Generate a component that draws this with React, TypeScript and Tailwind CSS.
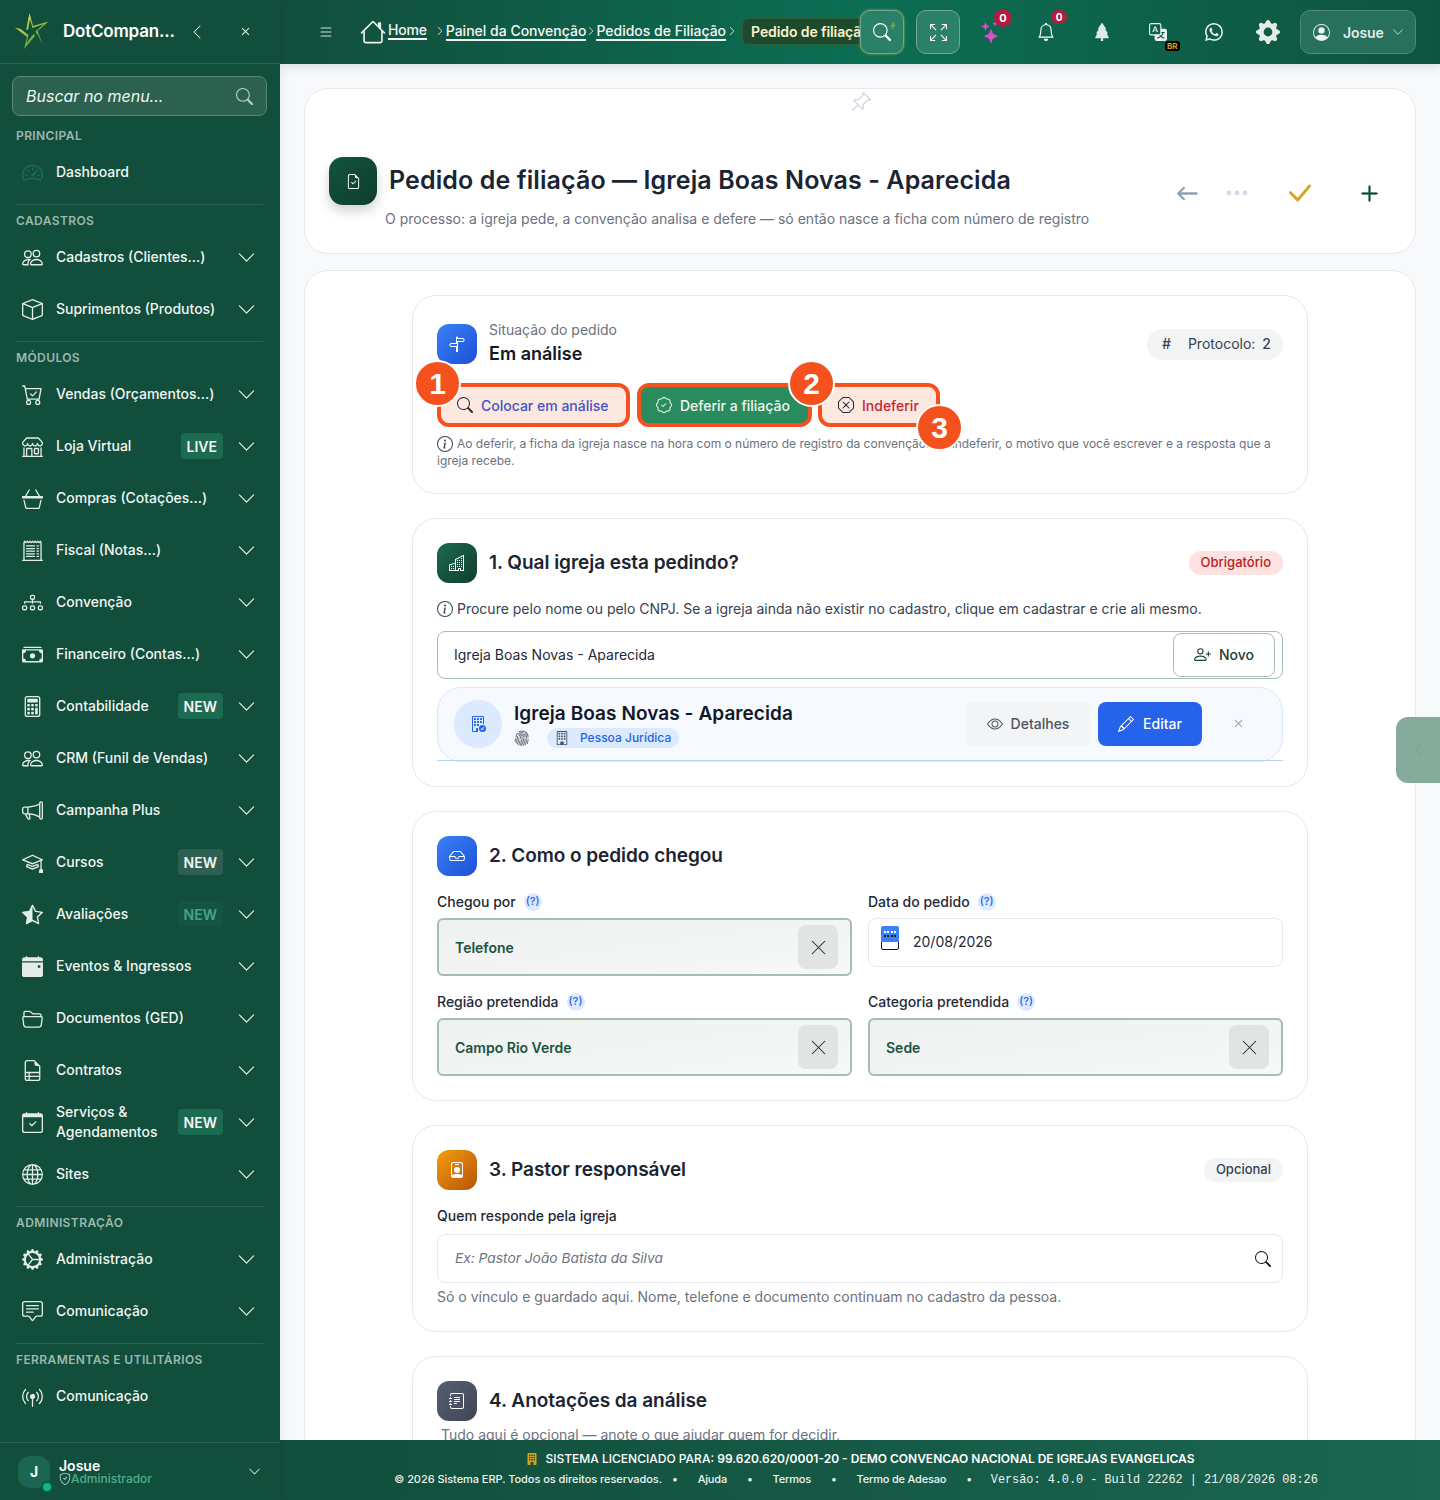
import React from "react";
import {
  BsSpeedometer2, BsPeople, BsBox, BsCartCheck, BsShop, BsBasket3, BsReceiptCutoff, BsDiagram3, BsCashStack,
  BsCalculator, BsMegaphone, BsMortarboard, BsStarHalf, BsCalendarEventFill, BsFolder2Open, BsFileEarmarkRuled,
  BsCalendarCheck, BsGlobe, BsGearWideConnected, BsChatSquareText, BsBroadcastPin, BsList, BsHouse, BsSearch, BsArrowsFullscreen,
  BsStars, BsBell, BsTreeFill, BsTranslate, BsWhatsapp, BsGearFill, BsPersonCircle, BsChevronDown, BsChevronLeft, BsChevronRight,
  BsLightningChargeFill, BsFileEarmarkCheck, BsPinAngle, BsArrowLeft, BsThreeDots, BsCheckLg, BsPlusLg, BsSignpostSplit,
  BsPatchCheck, BsXOctagon, BsInfoCircle, BsBuildings, BsPersonPlus, BsBuildingCheck, BsFingerprint, BsBuilding,
  BsEye, BsPencil, BsX, BsInbox, BsPersonBadge, BsJournalText, BsBuildingFill, BsShieldCheck,
} from "react-icons/bs";
import { X } from "lucide-react";

const display = "font-['Inter','Liberation_Sans',sans-serif]";

type Item = { label: React.ReactNode; icon: React.ComponentType<{ className?: string }>; badge?: string; badgeCls?: string; noChevron?: boolean };

function Row({ item }: { item: Item }) {
  const I = item.icon;
  return (
    <div className="flex h-[52px] items-center pl-[22px] pr-[24px]">
      <I className="h-[21px] w-[21px] shrink-0 text-[#e4ece8]" />
      <div className="ml-[13px] flex-1 text-[14px] font-medium leading-[20px] text-[#f1f5f3]">{item.label}</div>
      {item.badge && (
        <span className={`mr-[14px] flex h-[26px] items-center rounded-[4px] px-[6px] text-[14px] font-semibold ${item.badgeCls ?? "bg-[#1d6a52] text-[#f1f5f3]"}`}>
          {item.badge}
        </span>
      )}
      {!item.noChevron && <BsChevronDown className="h-[19px] w-[19px] shrink-0 text-[#e4ece8]" />}
    </div>
  );
}

function Label({ children }: { children: React.ReactNode }) {
  return <div className="mb-[3px] h-[16px] pl-[16px] text-[12px] font-semibold uppercase leading-[18px] tracking-[0.4px] text-[#9db8ad]">{children}</div>;
}

function Divider() {
  return <div className="mb-[7px] ml-[16px] mr-[17px] mt-[6px] h-px bg-[#2a6352]" />;
}

function Logo() {
  return (
    <svg viewBox="0 0 40 40" className="h-[40px] w-[40px]">
      <defs>
        <linearGradient id="lg" x1="0" y1="0" x2="0.6" y2="1">
          <stop offset="0" stopColor="#fff04a" />
          <stop offset="1" stopColor="#4f9a38" />
        </linearGradient>
      </defs>
      <path d="M16.5 1 L20 14 L35.5 9.5 L24.5 19 L30 33 L24 21.5 L11 37 L14 25 L2 15.5 L13 18.5 Z" fill="url(#lg)" />
      <path d="M17 7 L19.5 16 L31 12 L22.5 19.5 L26.5 28 L20.5 22 L13.5 31 L15.5 23 L7 16.5 L15 18 Z" fill="#114e3c" />
    </svg>
  );
}

function Sidebar() {
  const cad: Item[] = [
    { label: "Cadastros (Clientes...)", icon: BsPeople },
    { label: "Suprimentos (Produtos)", icon: BsBox },
  ];
  const mod: Item[] = [
    { label: "Vendas (Orçamentos...)", icon: BsCartCheck },
    { label: "Loja Virtual", icon: BsShop, badge: "LIVE" },
    { label: "Compras (Cotações...)", icon: BsBasket3 },
    { label: "Fiscal (Notas...)", icon: BsReceiptCutoff },
    { label: "Convenção", icon: BsDiagram3 },
    { label: "Financeiro (Contas...)", icon: BsCashStack },
    { label: "Contabilidade", icon: BsCalculator, badge: "NEW" },
    { label: "CRM (Funil de Vendas)", icon: BsPeople },
    { label: "Campanha Plus", icon: BsMegaphone },
    { label: "Cursos", icon: BsMortarboard, badge: "NEW", badgeCls: "bg-[#2f5f52] text-[#f1f5f3]" },
    { label: "Avaliações", icon: BsStarHalf, badge: "NEW", badgeCls: "bg-[#155443] text-[#45a585]" },
    { label: "Eventos & Ingressos", icon: BsCalendarEventFill },
    { label: "Documentos (GED)", icon: BsFolder2Open },
    { label: "Contratos", icon: BsFileEarmarkRuled },
    { label: <>Serviços &<br />Agendamentos</>, icon: BsCalendarCheck, badge: "NEW" },
    { label: "Sites", icon: BsGlobe },
  ];
  return (
    <aside className="relative z-20 flex h-full w-[280px] shrink-0 flex-col bg-[#114e3c] shadow-[2px_0_10px_rgba(0,0,0,0.06)]">
      <div className="flex h-[64px] shrink-0 items-center border-b border-[#2a6352] pl-[13px] pr-[26px]">
        <Logo />
        <span className={`ml-[10px] flex-1 pt-[1px] text-[17px] font-semibold tracking-[-0.2px] text-white ${display}`}>DotCompan...</span>
        <BsChevronLeft className="mr-[32px] h-[16px] w-[16px] text-[#dfe8e4]" />
        <BsX className="h-[17px] w-[17px] text-[#dfe8e4]" />
      </div>
      <div className="mb-[11px] ml-[12px] mr-[13px] mt-[12px] flex h-[40px] items-center rounded-[8px] border border-[#5a8878] bg-[#2c6150] pl-[13px] pr-[13px]">
        <span className="flex-1 text-[16px] italic text-[#f1f5f3]">Buscar no menu...</span>
        <BsSearch className="h-[17px] w-[17px] text-[#bcd0c7]" />
      </div>
      <Label>Principal</Label>
      <Row item={{ label: "Dashboard", noChevron: true, icon: ({ className }) => <BsSpeedometer2 className={`${className} !text-[#1f6f57]`} /> }} />
      <Divider />
      <Label>Cadastros</Label>
      {cad.map((i, k) => <Row key={k} item={i} />)}
      <Divider />
      <Label>Módulos</Label>
      {mod.map((i, k) => <Row key={k} item={i} />)}
      <Divider />
      <Label>Administração</Label>
      <Row item={{ label: "Administração", icon: BsGearWideConnected }} />
      <Row item={{ label: "Comunicação", icon: BsChatSquareText }} />
      <Divider />
      <Label>Ferramentas e utilitários</Label>
      <Row item={{ label: "Comunicação", icon: BsBroadcastPin, noChevron: true }} />
      <div className="mt-auto flex h-[58px] shrink-0 items-center border-t border-[#2a6352] pl-[18px] pr-[19px]">
        <div className="relative flex h-[32px] w-[32px] items-center justify-center rounded-[12px] bg-[#1a6650] text-[14px] font-bold text-white">
          J
          <span className="absolute -bottom-[3px] right-[-1px] h-[8px] w-[8px] rounded-full bg-[#10b981] ring-2 ring-[#0f5a44]" />
        </div>
        <div className="ml-[9px] flex-1 pt-[2px]">
          <div className="text-[14px] font-semibold leading-[13px] text-white">Josue</div>
          <div className="flex items-center text-[12px] font-medium leading-[14px] text-[#4fae8a]"><BsShieldCheck className="h-[12px] w-[12px] text-[#cfe0d8]" />Administrador</div>
        </div>
        <BsChevronDown className="h-[13px] w-[13px] text-[#dfe8e4]" />
      </div>
    </aside>
  );
}

function Crumb({ children, className = "" }: { children: React.ReactNode; className?: string }) {
  return <span className={`shrink-0 whitespace-nowrap border-b-2 border-[#f1f5f3] text-[14px] font-medium leading-[17px] text-[#f4f7f6] ${className}`}>{children}</span>;
}

function Sep({ className = "" }: { className?: string }) {
  return <BsChevronRight className={`h-[10px] w-[10px] shrink-0 text-[#dfe8e4] ${className}`} />;
}

function TopBar() {
  return (
    <header className="relative z-10 flex h-[64px] shrink-0 items-center bg-gradient-to-r from-[#114e3c] via-[#0a6e52] to-[#0f5440] pl-[38px] pr-[24px] shadow-[0_3px_10px_rgba(0,0,0,0.12)]">
      <BsList className="h-[16px] w-[16px] shrink-0 text-[#cfe0d8]" />
      <BsHouse className="ml-[26px] h-[26px] w-[26px] shrink-0 text-[#eef3f1]" />
      <div className="mb-[2px] ml-[2px] flex w-[474px] shrink-0 items-center overflow-hidden">
        <Crumb className="-mt-[2px] tracking-[-0.2px]">Home</Crumb>
        <Sep className="ml-[8px] mr-[1px]" />
        <Crumb>Painel da Convenção</Crumb>
        <Sep />
        <Crumb>Pedidos de Filiação</Crumb>
        <Sep className="ml-[1px]" />
        <span className="ml-[5px] flex h-[27px] shrink-0 items-center whitespace-nowrap rounded-[6px] border border-[#2f5f35] bg-[#1c4a2e] px-[8px] text-[14px] font-semibold tracking-[-0.1px] text-[#fdf3c8]">Pedido de filiação</span>
      </div>
      <div className="relative z-10 -ml-[2px] flex h-[44px] w-[44px] shrink-0 items-center justify-center rounded-[10px] border border-[#6fa893] bg-[#2b8068] shadow-[0_0_3px_rgba(190,170,60,0.8)]">
        <BsSearch className="h-[18px] w-[18px] text-white" />
        <BsLightningChargeFill className="absolute right-[6px] top-[9px] h-[11px] w-[8px] text-[#7aa04a]" />
      </div>
      <div className="ml-[12px] flex h-[44px] w-[44px] shrink-0 items-center justify-center rounded-[10px] border border-[#6fa893] bg-[#2b8068]">
        <BsArrowsFullscreen className="h-[17px] w-[17px] text-white" />
      </div>
      <div className="relative ml-[19px] flex w-[24px] shrink-0 justify-center">
        <BsStars className="h-[22px] w-[22px] text-[#d64fc8]" />
        <span className="absolute -top-[12px] left-[15px] flex h-[18px] w-[18px] items-center justify-center rounded-full bg-[#b01e3f] text-[11px] font-bold text-white">0</span>
      </div>
      <div className="relative ml-[31px] flex w-[24px] shrink-0 justify-center">
        <BsBell className="h-[18px] w-[18px] text-white" />
        <span className="absolute -top-[13px] left-[17px] flex h-[14px] w-[16px] items-center justify-center rounded-full bg-[#b01e3f] text-[10px] font-bold text-white">0</span>
      </div>
      <div className="ml-[32px] flex w-[24px] shrink-0 justify-center"><BsTreeFill className="h-[18px] w-[18px] text-[#e0ebe6]" /></div>
      <div className="relative ml-[32px] flex w-[24px] shrink-0 justify-center">
        <BsTranslate className="h-[18px] w-[18px] text-[#eef3f1]" />
        <span className="absolute -bottom-[10px] left-[19px] rounded-[3px] bg-black px-[2px] text-[8px] font-bold leading-[10px] text-[#d6a21e]">BR</span>
      </div>
      <div className="ml-[32px] flex w-[24px] shrink-0 justify-center"><BsWhatsapp className="h-[18px] w-[18px] text-[#eef3f1]" /></div>
      <div className="ml-[30px] flex w-[24px] shrink-0 justify-center"><BsGearFill className="h-[24px] w-[24px] text-[#e4ece8]" /></div>
      <div className="ml-[20px] flex h-[44px] w-[116px] shrink-0 items-center rounded-[10px] border border-[#4f8a78] bg-[#27705c] pl-[12px]">
        <BsPersonCircle className="h-[17px] w-[17px] text-[#eef3f1]" />
        <span className="ml-[13px] text-[14px] font-semibold tracking-[-0.1px] text-[#e4ece8]">Josue</span>
        <BsChevronDown className="ml-[8px] h-[12px] w-[12px] text-[#bcd0c7]" />
      </div>
    </header>
  );
}

function SectionHead({ icon: I, grad, title, badge, badgeCls }: { icon: React.ComponentType<{ className?: string }>; grad: string; title: string; badge?: string; badgeCls?: string }) {
  return (
    <div className="flex h-[40px] items-center">
      <div className={`flex h-[40px] w-[40px] items-center justify-center rounded-[12px] ${grad}`}><I className="h-[16px] w-[16px] text-white" /></div>
      <h2 className={`ml-[12px] flex-1 text-[19px] font-semibold leading-[26px] tracking-[-0.04px] text-[#1b2432] ${display}`}>{title}</h2>
      {badge && <span className={`flex h-[24px] items-center rounded-full px-[12px] text-[13px] font-medium ${badgeCls}`}>{badge}</span>}
    </div>
  );
}

function Help() {
  return <span className="ml-[8px] inline-flex h-[18px] w-[18px] items-center justify-center rounded-full bg-[#dbeafe] text-[11px] font-medium text-[#2563eb]">(?)</span>;
}

function FieldLabel({ children }: { children: React.ReactNode }) {
  return <label className="mb-[7px] flex h-[20px] items-center pt-[1px] text-[14px] font-medium text-[#1f2937]">{children}<Help /></label>;
}

function SelectField({ value }: { value: string }) {
  return (
    <div className="flex h-[58px] items-center rounded-[6px] border-2 border-[#a8bdb1] bg-gradient-to-br from-[#edf1ef] to-[#f7f8f8] pl-[16px] pr-[12px]">
      <span className="flex-1 text-[14px] font-semibold text-[#1c5240]">{value}</span>
      <span className="flex h-[44px] w-[40px] items-center justify-center rounded-[8px] bg-[#e0e5e2]"><X size={25} strokeWidth={1} className="text-[#1f2937]" /></span>
    </div>
  );
}

function Card({ className, children }: { className: string; children: React.ReactNode }) {
  return <section className={`rounded-[24px] border border-[#e6e8ee] bg-white px-[24px] ${className}`}>{children}</section>;
}

function Marker({ n, className }: { n: number; className: string }) {
  return (
    <span className={`absolute z-10 flex h-[47px] w-[47px] items-center justify-center rounded-full border-[2px] border-white bg-[#f4511e] font-['Liberation_Sans',sans-serif] text-[30px] font-bold text-white ${className}`}>{n}</span>
  );
}

function Content() {
  return (
    <div className="flex-1 overflow-hidden bg-[#f8f9fb] px-[24px] pt-[24px]">
      <div className="relative h-[166px] rounded-[24px] border border-[#e6e8ee] bg-white px-[24px] pt-[68px]">
        <BsPinAngle className="absolute left-[545px] top-[2px] h-[22px] w-[22px] text-[#cfd8e3]" />
        <div className="flex h-[48px] items-center">
          <div className="flex h-[48px] w-[48px] shrink-0 items-center justify-center rounded-[14px] bg-gradient-to-br from-[#14543f] to-[#0d3d2e] shadow-[0_6px_12px_rgba(0,0,0,0.18)]">
            <BsFileEarmarkCheck className="h-[15px] w-[15px] text-white" />
          </div>
          <h1 className={`-mt-[2px] ml-[12px] flex-1 text-[25px] font-semibold leading-[34px] tracking-[0.1px] text-[#1b2432] ${display}`}>Pedido de filiação — Igreja Boas Novas - Aparecida</h1>
          <div className="mr-[11px] flex translate-y-[12px] items-center">
            <BsArrowLeft className="h-[23px] w-[23px] text-[#8d9bb4] [stroke-width:0.6]" />
            <BsThreeDots className="ml-[25px] h-[26px] w-[26px] text-[#d3dae6]" />
            <BsCheckLg className="ml-[33px] h-[32px] w-[32px] text-[#d7a522]" />
            <BsPlusLg className="ml-[44px] h-[21px] w-[21px] text-[#114e3c] [stroke-width:0.6]" />
          </div>
        </div>
        <p className="ml-[56px] mt-[3px] text-[14px] leading-[22px] text-[#6b7280]">O processo: a igreja pede, a convenção analisa e defere — só então nasce a ficha com número de registro</p>
      </div>

      <div className="mt-[16px] h-[1300px] rounded-[24px] border border-[#e6e8ee] bg-white pt-[24px]">
        <div className="mx-auto flex w-[896px] flex-col gap-[24px]">
          {/* status */}
          <Card className="h-[199px] pt-[28px]">
            <div className="flex h-[40px] items-center">
              <div className="flex h-[40px] w-[40px] items-center justify-center rounded-[12px] bg-gradient-to-br from-[#3b82f6] to-[#1d4ed8]"><BsSignpostSplit className="h-[16px] w-[16px] text-white" /></div>
              <div className="ml-[12px] flex-1">
                <div className="text-[14px] leading-[18px] text-[#6b7280]">Situação do pedido</div>
                <div className="mt-[2px] text-[18px] font-semibold leading-[26px] text-[#111827]">Em análise</div>
              </div>
              <div className="flex h-[31px] items-center rounded-full bg-[#f3f4f6] pb-[1px] pl-[15px] pr-[12px] text-[14px] text-[#374151]">
                <span className="mr-[17px] font-medium">#</span>Protocolo:<span className="ml-[7px] font-medium">2</span>
              </div>
            </div>
            <div className="relative mt-[19px] flex gap-[7px]">
              <Marker n={1} className="left-[-23px] top-[-23px]" />
              <Marker n={2} className="left-[351px] top-[-23px]" />
              <Marker n={3} className="left-[479px] top-[21px]" />
              <button className="flex h-[44px] w-[193px] items-center rounded-[12px] border-[4px] border-[#f4511e] bg-[#fde8e0] pl-[16px]">
                <BsSearch className="h-[16px] w-[16px] text-[#1f2937]" />
                <span className="ml-[8px] text-[14px] font-medium text-[#4352c9]">Colocar em análise</span>
              </button>
              <button className="flex h-[44px] w-[175px] items-center rounded-[12px] border-[4px] border-[#f4511e] bg-[#2a8c5e] pl-[15px]">
                <BsPatchCheck className="h-[16px] w-[16px] text-[#e8f3ee]" />
                <span className="ml-[8px] text-[14px] font-medium text-[#eef6f1]">Deferir a filiação</span>
              </button>
              <button className="ml-[-1px] flex h-[44px] w-[122px] items-center rounded-[12px] border-[4px] border-[#f4511e] bg-[#fde8e0] pl-[16px]">
                <BsXOctagon className="h-[16px] w-[16px] text-[#1f2937]" />
                <span className="ml-[8px] text-[14px] font-medium text-[#c22738]">Indeferir</span>
              </button>
            </div>
            <p className="mt-[8px] text-[12px] leading-[17px] text-[#6b7280]">
              <BsInfoCircle className="mr-[4px] inline h-[16px] w-[16px] align-[-4px] text-[#374151]" />
              Ao deferir, a ficha da igreja nasce na hora com o número de registro da convenção. Ao indeferir, o motivo que você escrever e a resposta que a igreja recebe.
            </p>
          </Card>

          {/* section 1 */}
          <Card className="h-[269px] pt-[24px]">
            <SectionHead icon={BsBuildings} grad="bg-gradient-to-br from-[#1c6a50] to-[#0f3f30]" title="1. Qual igreja esta pedindo?" badge="Obrigatório" badgeCls="bg-[#fee2e2] text-[#b91c1c]" />
            <p className="mt-[16px] flex items-center text-[14px] leading-[20px] text-[#374151]">
              <BsInfoCircle className="mr-[4px] h-[16px] w-[16px] text-[#374151]" />
              Procure pelo nome ou pelo CNPJ. Se a igreja ainda não existir no cadastro, clique em cadastrar e crie ali mesmo.
            </p>
            <div className="mt-[12px] flex h-[48px] items-center rounded-[8px] border border-[#a8bdb1] pl-[16px] pr-[7px]">
              <span className="mb-[2px] flex-1 text-[14px] text-[#1f2937]">Igreja Boas Novas - Aparecida</span>
              <button className="flex h-[44px] w-[102px] items-center justify-center rounded-[8px] border border-[#a8bdb1] bg-white pb-[2px] text-[14px] font-medium text-[#1f3d33]">
                <BsPersonPlus className="mr-[8px] h-[17px] w-[17px]" />Novo
              </button>
            </div>
            <div className="relative mt-[8px] flex h-[75px] items-center rounded-[24px] border border-[#dbe8fb] bg-[#f6f9fe] pb-[2px] pl-[16px] pr-[35px]">
              <div className="flex h-[48px] w-[48px] items-center justify-center rounded-full bg-[#dbeafe]"><BsBuildingCheck className="h-[16px] w-[16px] text-[#2563eb]" /></div>
              <div className="ml-[12px] mt-[3px] flex-1">
                <div className={`text-[19px] font-semibold leading-[24px] tracking-[0.07px] text-[#111827] ${display}`}>Igreja Boas Novas - Aparecida</div>
                <div className="mt-[2px] flex items-center">
                  <BsFingerprint className="h-[16px] w-[16px] text-[#6b7280]" />
                  <span className="ml-[17px] flex h-[20px] items-center rounded-full bg-[#dbeafe] px-[8px] text-[12px] font-medium text-[#2563eb]">
                    <BsBuilding className="mr-[11px] h-[14px] w-[14px] text-[#4b5563]" />Pessoa Jurídica
                  </span>
                </div>
              </div>
              <button className="flex h-[44px] w-[124px] items-center justify-center rounded-[8px] bg-[#f3f4f6] text-[14px] font-medium text-[#4b5563]"><BsEye className="mr-[8px] h-[16px] w-[16px]" />Detalhes</button>
              <button className="ml-[8px] flex h-[44px] w-[104px] items-center justify-center rounded-[8px] bg-[#2563eb] text-[14px] font-medium text-white"><BsPencil className="mr-[9px] h-[16px] w-[16px]" />Editar</button>
              <BsX className="ml-[28px] h-[17px] w-[17px] text-[#9ca3af]" />
              <span className="absolute bottom-0 left-[-1px] right-[-1px] h-px bg-[#b9d5fb]" />
            </div>
          </Card>

          {/* section 2 */}
          <Card className="h-[290px] pt-[24px]">
            <SectionHead icon={BsInbox} grad="bg-gradient-to-br from-[#3b82f6] to-[#1d4ed8]" title="2. Como o pedido chegou" />
            <div className="mt-[15px] grid grid-cols-2 gap-x-[16px] gap-y-[15px]">
              <div>
                <FieldLabel>Chegou por</FieldLabel>
                <SelectField value="Telefone" />
              </div>
              <div>
                <FieldLabel>Data do pedido</FieldLabel>
                <div className="flex h-[49px] items-center rounded-[8px] border border-[#e6e8ee] pl-[12px]">
                  <span className="relative mb-[9px] h-[24px] w-[18px]">
                    <span className="absolute bottom-0 left-0 h-[15px] w-[18px] rounded-[2px] border-[1.5px] border-[#111827]" />
                    <span className="absolute left-0 top-0 flex h-[16px] w-[18px] flex-col gap-[2px] rounded-t-[2px] bg-[#3b82f6] px-[3px] pt-[5px]">
                      <span className="h-[2px] border-t-2 border-dotted border-white" />
                      <span className="h-[2px] border-t-2 border-dotted border-[#111827]" />
                    </span>
                  </span>
                  <span className="mb-[2px] ml-[14px] text-[14px] text-[#1f2937]">20/08/2026</span>
                </div>
              </div>
              <div>
                <FieldLabel>Região pretendida</FieldLabel>
                <SelectField value="Campo Rio Verde" />
              </div>
              <div>
                <FieldLabel>Categoria pretendida</FieldLabel>
                <SelectField value="Sede" />
              </div>
            </div>
          </Card>

          {/* section 3 */}
          <Card className="h-[207px] pt-[24px]">
            <SectionHead icon={BsPersonBadge} grad="bg-gradient-to-br from-[#f59e0b] to-[#b45309]" title="3. Pastor responsável" badge="Opcional" badgeCls="bg-[#f3f4f6] text-[#374151]" />
            <label className="mt-[16px] block text-[14px] font-medium leading-[20px] text-[#1f2937]">Quem responde pela igreja</label>
            <div className="mt-[8px] flex h-[49px] items-center rounded-[8px] border border-[#e6e8ee] pl-[17px] pr-[11px]">
              <span className="flex-1 text-[13.75px] italic text-[#6b7280]">Ex: Pastor João Batista da Silva</span>
              <BsSearch className="h-[16px] w-[16px] text-[#111827]" />
            </div>
            <p className="mt-[4px] text-[14px] leading-[20px] text-[#6b7280]">Só o vínculo e guardado aqui. Nome, telefone e documento continuam no cadastro da pessoa.</p>
          </Card>

          {/* section 4 */}
          <Card className="h-[200px] pt-[24px]">
            <SectionHead icon={BsJournalText} grad="bg-gradient-to-br from-[#565f73] to-[#3f4656]" title="4. Anotações da análise" />
            <p className="ml-[4px] mt-[4px] text-[14px] leading-[20px] text-[#6b7280]">Tudo aqui é opcional — anote o que ajudar quem for decidir.</p>
          </Card>
        </div>
      </div>
    </div>
  );
}

function Footer() {
  const Dot = () => <span className="mx-[10px] text-[11px]">•</span>;
  return (
    <footer className="relative z-10 flex h-[60px] shrink-0 flex-col items-center bg-gradient-to-r from-[#114e3c] to-[#1a6650] pt-[10px] text-white">
      <div className="flex h-[18px] items-center text-[12px] font-semibold">
        <BsBuildingFill className="mr-[8px] h-[12px] w-[12px] text-[#d6a21e]" />
        <span className="font-medium">SISTEMA LICENCIADO PARA:&nbsp;</span>99.620.620/0001-20 - DEMO CONVENCAO NACIONAL DE IGREJAS EVANGELICAS
      </div>
      <div className="mr-[8px] mt-[1px] flex h-[20px] items-center text-[11px] font-medium tracking-[-0.2px] text-[#eef3f1]">
        <span className="tracking-[-0.05px]">© 2026 Sistema ERP. Todos os direitos reservados.</span><Dot />
        <span className="mx-[10px]">Ajuda</span><Dot />
        <span className="mx-[10px]">Termos</span><Dot />
        <span className="mx-[10px]">Termo de Adesao</span><Dot />
        <span className="ml-[9px] mt-[3px] font-['Liberation_Mono',monospace] text-[11.85px] tracking-normal">Versão: 4.0.0 - Build 22262 | 21/08/2026 08:26</span>
      </div>
    </footer>
  );
}

export default function App() {
  return (
    <div className="relative flex h-[1500px] w-[1440px] overflow-hidden bg-[#f8f9fb] font-['Inter','Liberation_Sans',sans-serif]">
      <Sidebar />
      <main className="flex min-w-0 flex-1 flex-col">
        <TopBar />
        <Content />
        <Footer />
      </main>
      <div className="absolute right-0 top-[717px] z-20 flex h-[66px] w-[44px] items-center justify-center rounded-l-[12px] bg-[#86ab9c]">
        <BsChevronLeft className="h-[14px] w-[14px] text-[#7a9e90]" />
      </div>
    </div>
  );
}
